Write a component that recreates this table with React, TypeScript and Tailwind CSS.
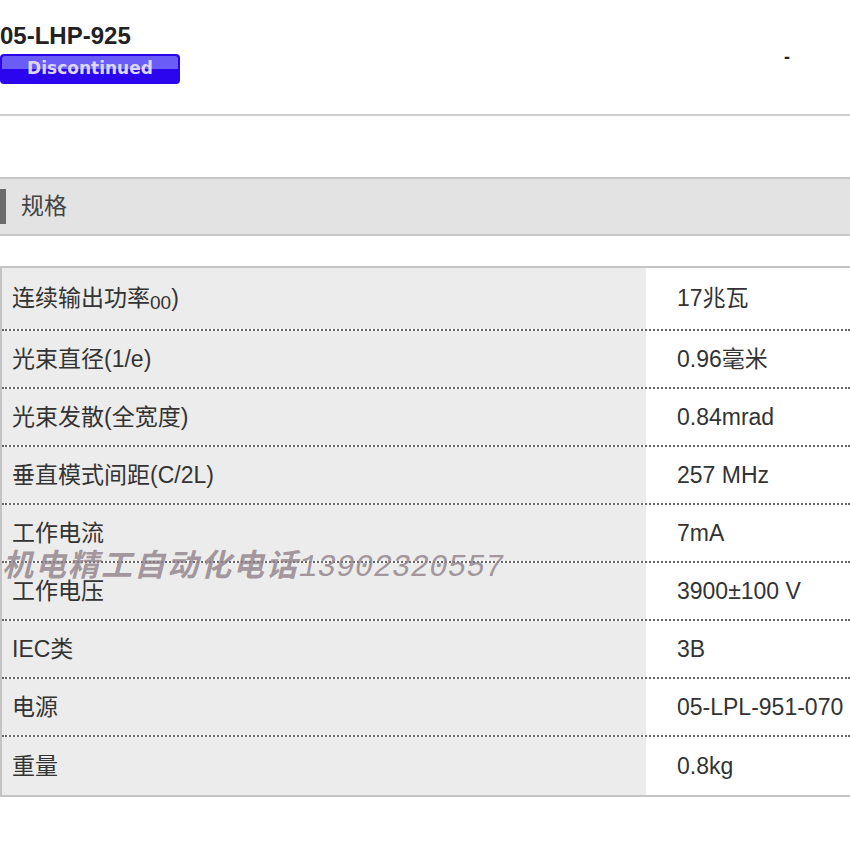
import React from 'react';

const font = "font-['Arial','Liberation_Sans','Noto_Sans_CJK_SC',sans-serif]";

const specs: { label: React.ReactNode; value: string; h: string }[] = [
  { label: <>连续输出功率<sub className="text-[19px] align-[-6px]">00</sub>)</>, value: '17兆瓦', h: 'h-[63px]' },
  { label: '光束直径(1/e)', value: '0.96毫米', h: 'h-[58px]' },
  { label: '光束发散(全宽度)', value: '0.84mrad', h: 'h-[58px]' },
  { label: '垂直模式间距(C/2L)', value: '257 MHz', h: 'h-[58px]' },
  { label: '工作电流', value: '7mA', h: 'h-[58px]' },
  { label: '工作电压', value: '3900±100 V', h: 'h-[58px]' },
  { label: 'IEC类', value: '3B', h: 'h-[58px]' },
  { label: '电源', value: '05-LPL-951-070', h: 'h-[58px]' },
  { label: '重量', value: '0.8kg', h: 'h-[58px]' },
];

export default function App() {
  return (
    <div className={`w-[850px] h-[850px] overflow-hidden bg-white text-[#333] ${font}`}>
      {/* product header */}
      <div className="flex items-start h-[114px] pt-[22px]">
        <div className="flex flex-col">
          <div className="text-[24px] leading-[28px] font-bold text-[#222]">05-LHP-925</div>
          <div className="mt-[4px] w-[180px] h-[30px] rounded-[4px] bg-[#2a05ee] relative overflow-hidden flex items-center justify-center">
            <div className="absolute left-[2px] right-[2px] top-[2px] h-[13px] rounded-t-[3px] bg-[#6a5cf6]" />
            <span className="relative text-[17px] font-bold text-[#dcd6ff] font-['DejaVu_Sans',sans-serif]">Discontinued</span>
          </div>
        </div>
        <div className="ml-auto mr-[60px] mt-[22px] text-[18px] font-bold text-[#222]">-</div>
      </div>
      <div className="h-[2px] bg-[#cfcfcf]" />

      {/* section header */}
      <div className="mt-[61px] h-[59px] bg-[#e3e3e3] border-y-2 border-[#c8c8c8] flex items-center">
        <div className="w-[6px] h-[35px] bg-[#6b6b6b]" />
        <div className="ml-[15px] text-[23px] text-[#444]">规格</div>
      </div>

      {/* spec table */}
      <div className="relative mt-[30px] border-t-2 border-b-2 border-l-2 border-[#c4c4c4]">
        {specs.map((s, i) => (
          <div
            key={i}
            className={`flex ${s.h} ${i < specs.length - 1 ? 'border-b-2 border-dotted border-[#666]' : ''}`}
          >
            <div className="w-[644px] bg-[#ececec] flex items-center pl-[10px] text-[23px] text-[#333]">
              {s.label}
            </div>
            <div className="flex-1 bg-white flex items-center pl-[31px] text-[23px] text-[#333] whitespace-nowrap">
              {s.value}
            </div>
          </div>
        ))}
        <div className="absolute left-0 top-[275px] text-[31px] italic font-bold text-[#8e8088]/80 whitespace-nowrap pointer-events-none tracking-[2px]">
          机电精工自动化电话<span className="font-['Liberation_Mono',monospace] font-normal tracking-[0px]">13902320557</span>
        </div>
      </div>
    </div>
  );
}
